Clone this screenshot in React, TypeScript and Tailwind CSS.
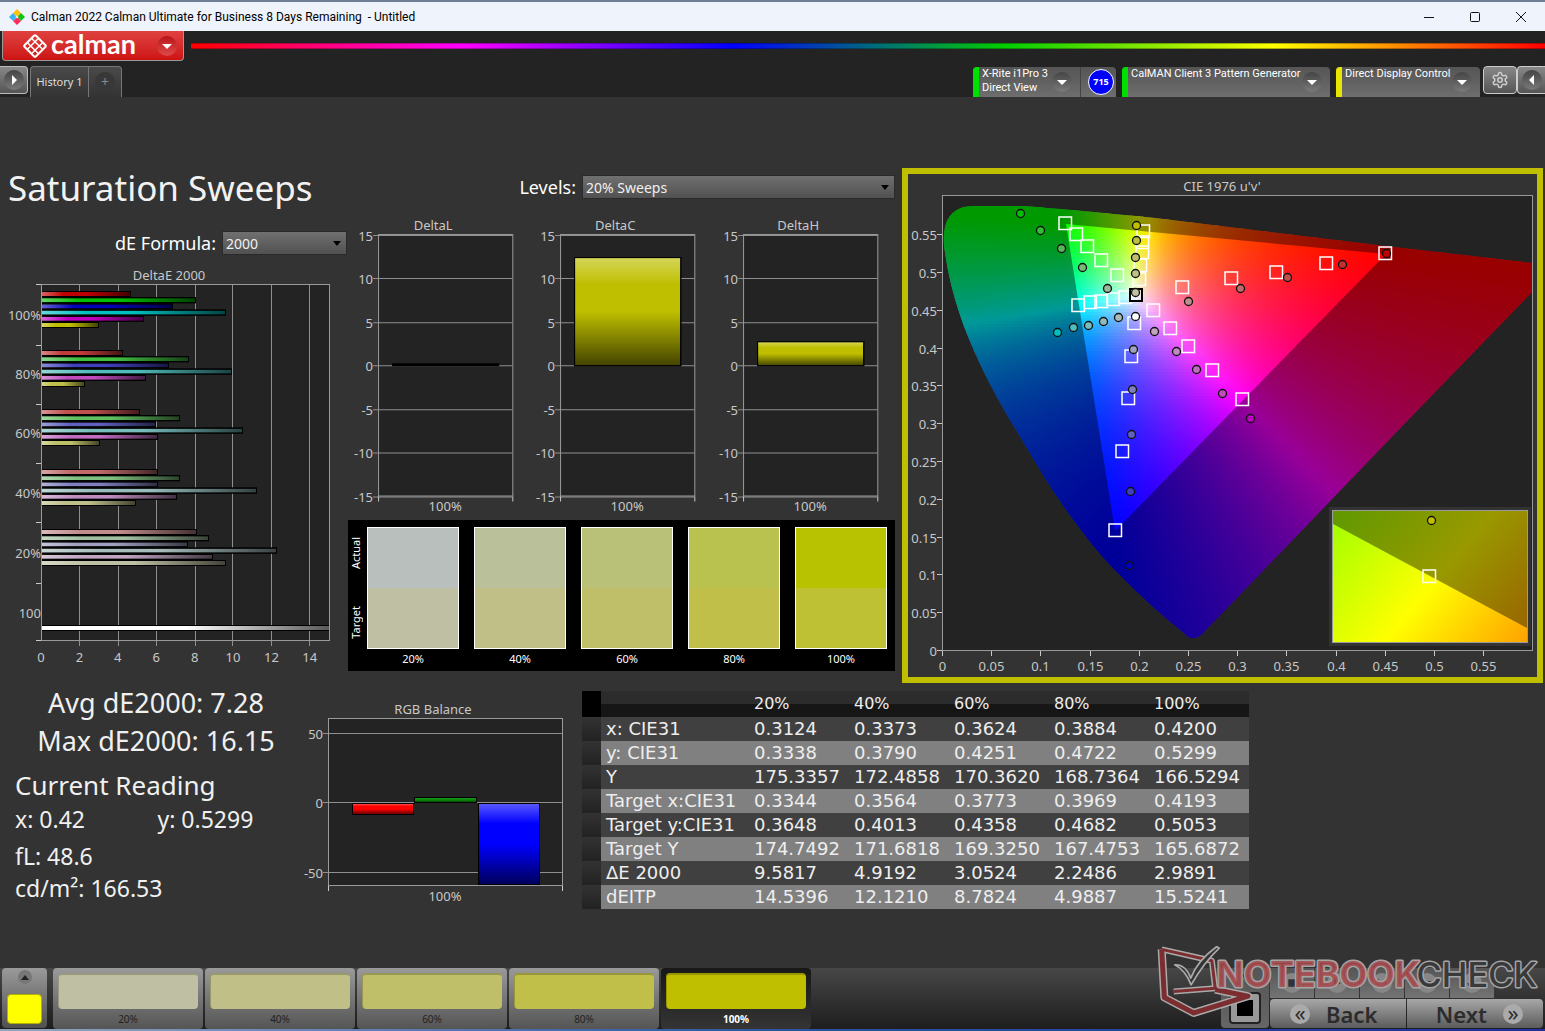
import React from "react";
import { LuSettings } from "react-icons/lu";

const LEVELS = ["20%", "40%", "60%", "80%", "100%"];

const ACTUAL = ["#b9bfbc", "#b9c09a", "#b9c077", "#b9c14f", "#b9c200"];
const TARGET = ["#bfbfa4", "#bfbf87", "#bfbf69", "#bfbf4a", "#bfc134"];
const TABS = ["#bfbfa4", "#bfbf87", "#bfbf69", "#bfbf4a", "#bfbf00"];

type BarGroup = { label: string; top: number; ends: number[]; colors: string[] };

const BAR_GROUPS: BarGroup[] = [
  {
    label: "100%",
    top: 294,
    ends: [130, 195, 172, 225, 143, 98],
    colors: ["#bf0000", "#00bf00", "#0000bf", "#00bfbf", "#bf00bf", "#bfbf00"],
  },
  {
    label: "80%",
    top: 353,
    ends: [122, 188, 168, 231, 145, 84],
    colors: ["#c03a3a", "#40bf40", "#4040bf", "#50bcbc", "#c04cc0", "#bfbf4a"],
  },
  {
    label: "60%",
    top: 412,
    ends: [139, 179, 155, 242, 157, 99],
    colors: ["#c05050", "#60bf60", "#6060c0", "#78bcbc", "#c06cc0", "#bfbf6a"],
  },
  {
    label: "40%",
    top: 472,
    ends: [157, 179, 157, 256, 176, 135],
    colors: ["#c06a6a", "#80c080", "#8080c0", "#98bcbc", "#c08cc0", "#bfbf8a"],
  },
  {
    label: "20%",
    top: 532,
    ends: [196, 208, 187, 276, 212, 225],
    colors: ["#c08c8c", "#a0c0a0", "#a0a0c0", "#a8bcbc", "#c0a4c0", "#bfbfa4"],
  },
];

const TABLE_ROWS: [string, string[]][] = [
  ["x: CIE31", ["0.3124", "0.3373", "0.3624", "0.3884", "0.4200"]],
  ["y: CIE31", ["0.3338", "0.3790", "0.4251", "0.4722", "0.5299"]],
  ["Y", ["175.3357", "172.4858", "170.3620", "168.7364", "166.5294"]],
  ["Target x:CIE31", ["0.3344", "0.3564", "0.3773", "0.3969", "0.4193"]],
  ["Target y:CIE31", ["0.3648", "0.4013", "0.4358", "0.4682", "0.5053"]],
  ["Target Y", ["174.7492", "171.6818", "169.3250", "167.4753", "165.6872"]],
  ["ΔE 2000", ["9.5817", "4.9192", "3.0524", "2.2486", "2.9891"]],
  ["dEITP", ["14.5396", "12.1210", "8.7824", "4.9887", "15.5241"]],
];

const TARGET_POINTS = [
  [1065, 223], [1076, 234], [1087, 246], [1101, 260], [1117, 275],
  [1143, 231], [1142, 242], [1142, 252], [1140, 265], [1139, 279],
  [1182, 287], [1231, 278], [1276, 272], [1326, 263], [1385, 253],
  [1153, 310], [1170, 328], [1188, 346], [1212, 370], [1242, 399],
  [1134, 323], [1131, 356], [1128, 398], [1122, 451], [1115, 530],
  [1125, 297], [1113, 299], [1101, 301], [1090, 302], [1078, 305],
];

const ACTUAL_POINTS: [number, number, string][] = [
  [1020, 213, "#00bf00"], [1040, 230, "#30bf30"], [1061, 248, "#58b858"],
  [1082, 267, "#78b878"], [1107, 288, "#98b898"],
  [1136, 225, "#bfbf00"], [1136, 240, "#bfbf40"], [1135, 257, "#bfbf69"],
  [1135, 273, "#bfbf87"], [1135, 292, "#bfbfa4"],
  [1386, 253, "#c00000"], [1342, 264, "#c03030"], [1287, 277, "#c05050"],
  [1240, 288, "#c06a6a"], [1188, 301, "#c08c8c"],
  [1057, 332, "#00bfbf"], [1073, 327, "#50bcbc"], [1088, 325, "#78bcbc"],
  [1103, 321, "#90bcbc"], [1118, 317, "#a8bcbc"],
  [1154, 331, "#c0a4c0"], [1176, 351, "#c08cc0"], [1196, 369, "#c06cc0"],
  [1222, 393, "#c04cc0"], [1250, 418, "#c000c0"],
  [1133, 349, "#a0a0c0"], [1132, 389, "#8080c0"], [1131, 434, "#6060c0"],
  [1130, 491, "#4040bf"], [1129, 565, "#0000bf"],
  [1135, 316, "#ffffff"],
];

// chart scale of the u'v' plane
const U0 = 942;
const V0 = 650;
const U_SCALE = 984;
const V_SCALE = 756;

const LOCUS =
  "M944 245 C943 228 946 206 974 206 L1023 206 Q1064 209 1155 218 L1270 232 L1385 246 L1533 263 V291 L1408 420 L1204 632 Q1193 644 1184 633 Q1150 606 1122 577 Q1100 556 1081 530 Q1058 500 1040 470 L1010 420 C980 368 952 312 944 245Z";
const GAMUT = "M1066 224 L1386 254 L1115 531Z";

const uvColor = (x: number, y: number) => {
  const u = (x - U0) / U_SCALE;
  const v = Math.max((V0 - y) / V_SCALE, 0.01);
  const X = (9 * u) / (4 * v);
  const Z = (12 - 3 * u - 20 * v) / (4 * v);
  const rgb = [
    3.2406 * X - 1.5372 - 0.4986 * Z,
    -0.9689 * X + 1.8758 + 0.0415 * Z,
    0.0557 * X - 0.204 + 1.057 * Z,
  ].map((c) => Math.max(c, 0));
  const max = Math.max(...rgb);
  return `rgb(${rgb.map((c) => Math.round((c / max) * 255)).join(",")})`;
};

const STRIP = 3;
const strips = Array.from({ length: 146 }, (_, i) => 204 + i * STRIP);
const stops = Array.from({ length: 41 }, (_, i) => i / 40);

const Shades = () => (
  <svg className="absolute h-0 w-0" aria-hidden="true">
    <defs>
      <linearGradient id="shade-x">
        <stop offset="0" stopColor="#fff" stopOpacity=".4" />
        <stop offset=".25" stopColor="#fff" stopOpacity="0" />
        <stop offset=".5" stopColor="#000" stopOpacity="0" />
        <stop offset="1" stopColor="#000" stopOpacity=".65" />
      </linearGradient>
      <linearGradient id="shade-y" x2="0" y2="1">
        <stop offset="0" stopColor="#fff" stopOpacity=".35" />
        <stop offset=".25" stopColor="#fff" stopOpacity="0" />
        <stop offset=".5" stopColor="#000" stopOpacity="0" />
        <stop offset="1" stopColor="#000" stopOpacity=".65" />
      </linearGradient>
    </defs>
  </svg>
);

type BarProps = {
  x: number;
  y: number;
  width: number;
  height: number;
  color: string;
  shade: string;
};
const Bar = ({ x, y, width, height, color, shade }: BarProps) => (
  <g stroke="#000">
    <rect x={x} y={y} width={width} height={height} fill={color} />
    <rect x={x} y={y} width={width} height={height} fill={`url(#${shade})`} />
  </g>
);

const DeltaEChart = () => (
  <svg viewBox="0 256 348 414" className="block h-auto w-full text-[13px]" fill="#c8c8c8">
    <text x="169" y="280" textAnchor="middle">DeltaE 2000</text>
    <rect x="41.5" y="284.5" width="288" height="356" fill="#232323" />
    <g stroke="#8f8f8f">
      {[79, 118, 156, 195, 232, 271, 309].map((x) => (
        <path key={x} d={`M${x + 0.5} 285V646`} />
      ))}
      {[284, 345, 404, 463, 522, 583, 640].map((y) => (
        <path key={y} d={`M36 ${y + 0.5}H41`} stroke="#c8c8c8" />
      ))}
    </g>
    {BAR_GROUPS.map((group) => (
      <g key={group.label}>
        {group.ends.map((end, i) => (
          <Bar
            key={i}
            x={41.5}
            y={group.top + i * 6.2 - 2.5}
            width={end - 41}
            height={5}
            color={group.colors[i]}
            shade="shade-x"
          />
        ))}
        <text x="41" y={group.top + 26} textAnchor="end">{group.label}</text>
      </g>
    ))}
    <Bar x={41.5} y={625.5} width={288} height={5} color="#ffffff" shade="shade-x" />
    <text x="41" y="618" textAnchor="end">100</text>
    <rect x="41.5" y="284.5" width="288" height="356" fill="none" stroke="#9a9a9a" />
    {[0, 2, 4, 6, 8, 10, 12, 14].map((n) => (
      <text key={n} x={41 + n * 19.2} y="662" textAnchor="middle">{n}</text>
    ))}
  </svg>
);

type DeltaProps = { title: string; top: number };
const DeltaChart = ({ title, top }: DeltaProps) => (
  <svg viewBox="0 216 182 303" className="block h-auto w-full text-[13px]" fill="#c8c8c8">
    <text x="85" y="230" textAnchor="middle">{title}</text>
    <rect x="30.5" y="234.5" width="134" height="261" fill="#232323" />
    {[15, 10, 5, 0, -5, -10, -15].map((n) => {
      const y = Math.round(365 - n * 8.7) + 0.5;
      return (
        <g key={n}>
          <path d={`M25 ${y}H164`} stroke="#8f8f8f" />
          <text x="25" y={y + 5} textAnchor="end">{n}</text>
        </g>
      );
    })}
    {top > 362 ? (
      <rect x="44" y="363" width="107" height="3" fill="#000" />
    ) : (
      <Bar x={44.5} y={top} width={106} height={365.5 - top} color="#bfbf00" shade="shade-y" />
    )}
    <rect x="30.5" y="234.5" width="134" height="261" fill="none" stroke="#9a9a9a" />
    <path d="M30.5 496V501M164.5 496V501" stroke="#c8c8c8" />
    <text x="97" y="510" textAnchor="middle">100%</text>
  </svg>
);

const RgbBalance = () => (
  <svg viewBox="300 691 282 217" className="block h-auto w-full text-[13px]" fill="#c8c8c8">
    <text x="433" y="714" textAnchor="middle">RGB Balance</text>
    <rect x="328.5" y="718.5" width="234" height="167" fill="#232323" />
    {[["50", 734], ["0", 803], ["-50", 873]].map(([label, y]) => (
      <g key={label}>
        <path d={`M323 ${Number(y) - 0.5}H562`} stroke="#8f8f8f" />
        <text x="323" y={Number(y) + 5} textAnchor="end">{label}</text>
      </g>
    ))}
    <Bar x={352.5} y={803.5} width={61} height={11} color="#ff0000" shade="shade-y" />
    <Bar x={414.5} y={797.5} width={62} height={5} color="#0a8a0a" shade="shade-y" />
    <Bar x={478.5} y={803.5} width={61} height={81} color="#0000ff" shade="shade-y" />
    <rect x="328.5" y="718.5" width="234" height="167" fill="none" stroke="#9a9a9a" />
    <path d="M328.5 886V891M562.5 886V891" stroke="#c8c8c8" />
    <text x="445" y="901" textAnchor="middle">100%</text>
  </svg>
);

const CieChart = () => (
  <svg viewBox="908 174 629 503" className="block h-auto w-full text-[13px]" fill="#c8c8c8">
    <defs>
      <clipPath id="locus">
        <path d={LOCUS} />
      </clipPath>
      {strips.map((y) => (
        <linearGradient key={y} id={`uv-${y}`}>
          {stops.map((s) => (
            <stop key={s} offset={s} stopColor={uvColor(943 + s * 590, y + STRIP / 2)} />
          ))}
        </linearGradient>
      ))}
      <linearGradient id="inset" gradientUnits="userSpaceOnUse" x1="1340" y1="505" x2="1520" y2="655">
        <stop offset="0" stopColor="#a0ff00" />
        <stop offset=".52" stopColor="#ffff00" />
        <stop offset="1" stopColor="#ffa000" />
      </linearGradient>
    </defs>
    <text x="1222" y="191" textAnchor="middle">CIE 1976 u'v'</text>
    <rect x="942.5" y="195.5" width="590" height="455" fill="#232323" />
    <g clipPath="url(#locus)">
      {strips.map((y) => (
        <rect key={y} x="943" y={y} width="590" height={STRIP + 0.5} fill={`url(#uv-${y})`} />
      ))}
    </g>
    <path d={LOCUS + GAMUT} fill="#000" fillOpacity=".4" fillRule="evenodd" />
    <rect x="942.5" y="195.5" width="590" height="455" fill="none" stroke="#9a9a9a" />

    <g fill="none" stroke="#fff" strokeWidth="1.5">
      {TARGET_POINTS.map(([x, y]) => (
        <rect key={`${x}-${y}`} x={x - 6} y={y - 6} width="12.5" height="12.5" />
      ))}
      <rect x="1130" y="289" width="12" height="12" stroke="#000" strokeWidth="2" />
    </g>
    {ACTUAL_POINTS.map(([x, y, color]) => (
      <circle key={`${x}-${y}`} cx={x + 0.5} cy={y + 0.5} r="4" fill={color} stroke="#111" strokeWidth="1.3" />
    ))}

    {Array.from({ length: 12 }, (_, i) => {
      const label = String(Number((i * 0.05).toFixed(2)));
      const x = Math.round(U0 + i * 0.05 * U_SCALE) + 0.5;
      const y = Math.round(V0 - i * 0.05 * V_SCALE) + 0.5;
      return (
        <g key={i}>
          <path d={`M${x} 651V656M937 ${y}H942`} stroke="#c8c8c8" />
          <text x={x} y="671" textAnchor="middle">{label}</text>
          <text x="937" y={y + 5} textAnchor="end">{label}</text>
        </g>
      );
    })}

    <rect x="1329" y="507" width="202" height="139" fill="#333" />
    <rect x="1332.5" y="510.5" width="195" height="132" fill="url(#inset)" />
    <path d="M1333 524V511H1527V628Z" fill="#000" fillOpacity=".4" />
    <rect x="1332.5" y="510.5" width="195" height="132" fill="none" stroke="#9a9a9a" />
    <rect x="1423" y="570" width="12.5" height="12.5" fill="none" stroke="#fff" strokeWidth="1.5" />
    <circle cx="1431.5" cy="520.5" r="4" fill="#bfbf00" stroke="#111" strokeWidth="1.3" />
  </svg>
);

type SelectProps = { id: string; label: string; value: string; className: string };
const SelectField = ({ id, label, value, className }: SelectProps) => (
  <div className="flex items-center justify-end gap-1.5 text-white">
    <label htmlFor={id} className="text-lg leading-6">{label}</label>
    <div className={`relative ${className}`}>
      <select
        id={id}
        defaultValue={value}
        className="block h-6 w-full appearance-none border border-[#2a2a2a] bg-linear-to-b from-[#707070] to-[#515151] pt-0.5 pl-[3px] text-sm leading-5 text-[#f0f0f0]"
      >
        <option>{value}</option>
      </select>
      <svg viewBox="0 0 8 5" className="pointer-events-none absolute top-2.5 right-1.5 h-[5px] w-2">
        <path d="M0 0H8L4 5Z" />
      </svg>
    </div>
  </div>
);

const Knob = ({ d }: { d: string }) => (
  <span className="flex h-5 w-5 shrink-0 items-center justify-center rounded-full bg-linear-to-b from-[#454545] to-[#7a7a7a]">
    <svg viewBox="0 0 10 10" className="h-2.5 w-2.5" fill="#fff">
      <path d={d} />
    </svg>
  </span>
);

const DOWN = "M0 3H10L5 8Z";

type DeviceProps = { lines: string[]; stripe: string; className: string };
const Device = ({ lines, stripe, className }: DeviceProps) => (
  <button
    className={`flex h-[30px] overflow-hidden rounded-t bg-linear-to-b from-[#555] to-[#6e6e6e] text-left font-[Roboto] text-[11px] leading-[14px] text-white ${className}`}
  >
    <span className={`mr-[3px] h-full w-1.5 shrink-0 ${stripe}`} />
    <span className="flex-1 whitespace-nowrap">
      {lines.map((line) => (
        <span key={line} className="block">{line}</span>
      ))}
    </span>
    <span className="mt-[5px] mr-2">
      <Knob d={DOWN} />
    </span>
  </button>
);

const TitleBar = () => (
  <div className="flex h-[31px] items-center border-t-2 border-[#6d7f95] bg-[#eff3fb] pr-px text-black">
    <svg viewBox="0 0 16 16" className="ml-[9px] h-4 w-4">
      <path d="M8 0L12 4L8 8L4 4Z" fill="#ffc20e" />
      <path d="M12 4L16 8L12 12L8 8Z" fill="#14c414" />
      <path d="M8 8L12 12L8 16L4 12Z" fill="#ff2a5f" />
      <path d="M4 4L8 8L4 12L0 8Z" fill="#3cb4f4" />
      <path d="M8 6.5L9.500 8L8 9.500L6.500 8Z" fill="#eff3fb" />
    </svg>
    <span className="ml-1.5 flex-1 font-[Roboto] text-xs whitespace-pre">
      Calman 2022 Calman Ultimate for Business 8 Days Remaining  - Untitled
    </span>
    {[
      ["Minimize", "M0 5.5H10"],
      ["Maximize", "M1.5 .5H8.500Q9.500 .5 9.500 1.500V8.500Q9.500 9.500 8.500 9.500H1.500Q.5 9.500 .5 8.500V1.500Q.5 .5 1.500 .5Z"],
      ["Close", "M0 0L10 10M10 0L0 10"],
    ].map(([name, d]) => (
      <button key={name} aria-label={name} className="flex h-full w-[46px] items-center justify-center">
        <svg viewBox="0 0 10 10" className="h-2.5 w-2.5" fill="none" stroke="#111">
          <path d={d} />
        </svg>
      </button>
    ))}
  </div>
);

const Header = () => (
  <header className="bg-[#232323]">
    <div className="flex h-[30px] items-center gap-[7px] pl-0.5">
      <button className="flex h-full w-[182px] items-center rounded-b border-x border-b border-[#999] bg-linear-to-b from-[#e04040] to-[#cc1111] pl-5">
        <svg viewBox="0 0 24 24" className="h-6 w-6" fill="none" stroke="#fff" strokeWidth="2">
          <g transform="rotate(45 12 12)">
            <path d="M4 9V5.500Q4 4 5.500 4H9M15 4H18.500Q20 4 20 5.500V9M20 15V18.500Q20 20 18.500 20H15M9 20H5.500Q4 20 4 18.500V15" />
            <path d="M9 4V20M15 4V20M4 9H20M4 15H20" strokeWidth="1.500" />
            <path d="M4 9V15M20 9V15M9 4H15M9 20H15" />
          </g>
        </svg>
        <span className="ml-1 flex-1 pb-1 text-left font-[Lato] text-[27px] leading-7 font-bold text-white">
          calman
        </span>
        <span className="mr-1.5 flex h-5 w-5 items-center justify-center rounded-full bg-linear-to-b from-[#b80f18] to-[#e04848]">
          <svg viewBox="0 0 10 10" className="h-2.5 w-2.5" fill="#fff">
            <path d={DOWN} />
          </svg>
        </span>
      </button>
      <div className="h-1.5 flex-1 border-y border-black/30 bg-[linear-gradient(to_right,#f00,#f0f_20%,#00f_40%,#0c0_60%,#ff0_80%,#f00)]" />
    </div>
    <div className="flex h-9 items-end">
      <button
        aria-label="Show panel"
        className="mr-0.5 mb-[3px] flex h-7 w-7 items-center justify-center rounded-r border border-l-0 border-[#bbb] bg-linear-to-b from-[#888] to-[#555]"
      >
        <Knob d="M3 0V10L8 5Z" />
      </button>
      <div className="flex h-[31px] rounded-t border border-b-0 border-[#777] bg-linear-to-b from-[#4a4a4a] to-[#333] text-[11px] text-[#ddd]">
        <button className="w-[58px] border-r border-[#777]">History 1</button>
        <button className="flex w-8 items-center justify-center">
          <span className="h-5 w-5 rounded-full bg-[#383838] text-sm leading-5 text-[#888]">+</span>
        </button>
      </div>
      <div className="flex-1" />
      <Device lines={["X-Rite i1Pro 3", "Direct View"]} stripe="bg-[#00e000]" className="w-[107px] rounded-r-none" />
      <div className="mr-1.5 flex h-[30px] w-9 items-center justify-end rounded-tr border-l border-[#444] bg-linear-to-b from-[#555] to-[#6e6e6e] pr-0.5">
        <span className="flex h-[26px] w-[26px] items-center justify-center rounded-full border border-white bg-[#0000ff] text-[9px] font-bold text-white">
          715
        </span>
      </div>
      <Device lines={["CalMAN Client 3 Pattern Generator"]} stripe="bg-[#00e000]" className="mr-1.5 w-52" />
      <Device lines={["Direct Display Control"]} stripe="bg-[#e6e600]" className="mr-[3px] w-36" />
      <button
        aria-label="Settings"
        className="mb-[3px] flex h-7 w-[34px] items-center justify-center rounded border border-[#ccc] bg-linear-to-b from-[#888] to-[#555]"
      >
        <LuSettings className="h-[18px] w-[18px] text-[#ccc]" />
      </button>
      <button
        aria-label="Collapse"
        className="mb-[3px] flex h-7 w-7 items-center justify-center rounded-l border border-r-0 border-[#ccc] bg-linear-to-b from-[#888] to-[#555]"
      >
        <Knob d="M7 0V10L2 5Z" />
      </button>
    </div>
  </header>
);

const SwatchStrip = () => (
  <div className="flex bg-black pt-[7px] pr-2 text-[11px] text-white">
    <div className="flex h-[122px] w-[19px] shrink-0 flex-col justify-between py-2.5">
      <span className="rotate-180 leading-4 [writing-mode:vertical-rl]">Actual</span>
      <span className="rotate-180 leading-4 [writing-mode:vertical-rl]">Target</span>
    </div>
    <div className="grid h-36 flex-1 grid-cols-5 gap-[15px]">
      {LEVELS.map((level, i) => (
        <div key={level}>
          <div className="flex h-[122px] flex-col border border-white">
            <div className="flex-1" style={{ background: ACTUAL[i] }} />
            <div className="flex-1" style={{ background: TARGET[i] }} />
          </div>
          <p className="text-center leading-5">{level}</p>
        </div>
      ))}
    </div>
  </div>
);

const Readings = () => (
  <div className="pt-px text-[23px] leading-8 text-[#f0f0f0]">
    <p className="pl-3 text-center text-[27px] leading-[38px]">Avg dE2000: 7.28</p>
    <p className="pl-3 text-center text-[27px] leading-[38px]">Max dE2000: 16.15</p>
    <div className="pl-[15px]">
      <h2 className="mt-1.5 text-[26px] leading-[38px]">Current Reading</h2>
      <div className="grid grid-cols-2">
        <p className="leading-[30px]">x: 0.42</p>
        <p className="leading-[30px]">y: 0.5299</p>
      </div>
      <p className="mt-1.5">fL: 48.6</p>
      <p>cd/m²: 166.53</p>
    </div>
  </div>
);

const DataTable = () => (
  <table className="w-full table-fixed text-left font-['DejaVu_Sans'] text-lg leading-6 text-[#eee]">
    <colgroup>
      <col className="w-[19px]" />
      <col className="w-[148px]" />
      <col span={5} />
    </colgroup>
    <thead>
      <tr className="h-[26px] bg-linear-to-b from-[#2c2c2c] from-50% to-[#161616] to-50% text-base">
        <td className="bg-black" />
        <td />
        {LEVELS.map((level) => (
          <th key={level} scope="col" className="p-0 pl-[5px] leading-5 font-normal">{level}</th>
        ))}
      </tr>
    </thead>
    <tbody>
      {TABLE_ROWS.map(([name, values]) => (
        <tr key={name} className="h-6 odd:bg-[#404040] even:bg-[#808080]">
          <td className="bg-linear-to-b from-[#333] to-[#222]" />
          <th scope="row" className="p-0 pl-[5px] font-normal whitespace-nowrap">{name}</th>
          {values.map((value) => (
            <td key={value} className="p-0 pl-[5px]">{value}</td>
          ))}
        </tr>
      ))}
    </tbody>
  </table>
);

const TOOL_ICONS = [
  ["Stop", "M3 3H13V13H3Z"],
  ["Play", "M4 2V14L13 8Z"],
  ["Read series", "M2 3H4V13H2ZM12 3H14V13H12ZM5 6H7V10H5ZM9 6H11V10H9Z"],
  ["Loop", "M5 5A3 3 0 1 0 5 11Q8 11 8 8Q8 5 11 5A3 3 0 1 1 11 11L10 9H12V7H10Q9 11 5 11L5 9H4V7H6Z"],
  ["Refresh", "M8 2A6 6 0 0 1 14 8H11A3 3 0 0 0 8 5ZM8 14A6 6 0 0 1 2 8H5A3 3 0 0 0 8 11Z"],
];

const Watermark = () => (
  <svg
    viewBox="50 30 1160 230"
    className="pointer-events-none absolute right-0 bottom-2 h-[77px] w-[388px]"
    fill="none"
    strokeLinejoin="round"
  >
    {[["#aaaaaa", 24], ["#7c2d30", 15]].map(([color, width]) => (
      <g key={color} stroke={String(color)} strokeWidth={width}>
        <path d="M64 46L214 80L224 162L100 172" strokeWidth={Number(width) - 6} />
        <path d="M224 166L322 186L160 236L72 190L64 46" />
      </g>
    ))}
    <path d="M103 92Q135 90 151 132Q170 80 228 38L236 42Q190 85 152 152Q135 108 103 92Z" fill="#333" stroke="#aaa" strokeWidth="5" />
    <g className="font-[Inter]" strokeWidth="9" paintOrder="stroke">
      <text x="228" y="158" fill="#a8484c" fillOpacity=".85" stroke="#a5a5a5" className="text-[107px] font-bold">NOTEBOOK</text>
      <text x="826" y="158" fill="#3a3a3a" stroke="#a5a5a5" className="text-[103px] font-medium">CHECK</text>
    </g>
  </svg>
);

const Footer = () => (
  <footer className="relative flex h-[61px] items-start bg-linear-to-b from-[#474747] to-[#1e1e1e] pr-0.5 pl-0.5">
    <button
      aria-label="Pattern window"
      className="mr-1.5 flex h-[60px] w-[45px] flex-col items-center justify-between rounded bg-linear-to-b from-[#9a9a9a] to-[#505050] pt-0.5 pb-1"
    >
      <span className="flex h-3.5 w-3.5 items-center justify-center rounded-full bg-[#777]">
        <svg viewBox="0 0 8 5" className="h-[5px] w-2" fill="#222">
          <path d="M4 0L8 5H0Z" />
        </svg>
      </span>
      <span className="h-[30px] w-[35px] rounded-sm border border-[#b0b000] bg-[#ffff00]" />
    </button>
    <div className="flex gap-0.5">
      {LEVELS.map((level, i) => (
        <button
          key={level}
          className={`flex h-[61px] w-[150px] flex-col rounded px-[5px] pt-[5px] text-[10px] ${
            i === 4
              ? "bg-linear-to-b from-[#181818] to-[#353535] font-bold text-white"
              : "bg-linear-to-b from-[#9a9a9a] to-[#555] text-[#222]"
          }`}
        >
          <span className="h-9 w-full shrink-0 rounded border-t-2 border-l border-black/20" style={{ background: TABS[i] }} />
          <span className="w-full text-center leading-5">{level}</span>
        </button>
      ))}
    </div>
    <div className="flex-1" />
    <button
      aria-label="Abort"
      className="mr-px flex h-[60px] w-12 flex-col items-center justify-between rounded bg-linear-to-b from-[#555] to-[#666] pt-1 pb-1"
    >
      <svg viewBox="0 0 8 5" className="h-[5px] w-2" fill="#222">
        <path d="M4 0L8 5H0Z" />
      </svg>
      <span className="flex h-8 w-8 items-center justify-center rounded border-2 border-[#222] bg-[#999]">
        <span className="h-4 w-4 bg-black" />
      </span>
    </button>
    <div className="w-[273px]">
      <div className="mb-px flex h-[30px] gap-px">
        {TOOL_ICONS.map(([name, d]) => (
          <button key={name} aria-label={name} className="flex h-full w-11 items-center justify-center bg-linear-to-b from-[#555] to-[#747474]">
            <span className="flex h-5 w-5 items-center justify-center rounded-full bg-[#868686]">
              <svg viewBox="0 0 16 16" className="h-3 w-3" fill="#333">
                <path d={d} />
              </svg>
            </span>
          </button>
        ))}
      </div>
      <div className="flex h-[29px] gap-px text-[22px] leading-7 font-semibold text-[#2c2c2c]">
        <button className="flex flex-1 items-center gap-4 rounded-l bg-linear-to-b from-[#a8a8a8] to-[#5c5c5c] pl-5">
          <span className="h-5 w-5 rounded-full bg-[#aaa] text-center leading-4 font-normal">«</span>
          Back
        </button>
        <button className="flex flex-1 items-center justify-end gap-4 rounded-r bg-linear-to-b from-[#a8a8a8] to-[#5c5c5c] pr-5">
          Next
          <span className="h-5 w-5 rounded-full bg-[#aaa] text-center leading-4 font-normal">»</span>
        </button>
      </div>
    </div>
    <Watermark />
  </footer>
);

const App = () => {
  return (
    <div className="flex min-h-screen w-full flex-col bg-[#333] font-['Noto_Sans',sans-serif]">
      <Shades />
      <TitleBar />
      <Header />
      <main className="flex-1 pt-[71px]">
        <section className="grid grid-cols-[348fr_553fr_644fr] items-start">
          <div>
            <h1 className="pl-2 text-[35px] leading-10 text-[#f2f2f2]">Saturation Sweeps</h1>
            <div className="mt-[23px] pr-px pb-px">
              <SelectField id="formula" label="dE Formula:" value="2000" className="w-[125px]" />
            </div>
            <DeltaEChart />
          </div>
          <div className="pt-[7px] pr-1.5">
            <SelectField id="levels" label="Levels:" value="20% Sweeps" className="w-[313px]" />
            <div className="mt-[17px] grid grid-cols-3">
              <DeltaChart title="DeltaL" top={363} />
              <DeltaChart title="DeltaC" top={257.5} />
              <DeltaChart title="DeltaH" top={341.5} />
            </div>
            <SwatchStrip />
          </div>
          <div className="mr-0.5 ml-px border-[6px] border-[#bfbf00]">
            <CieChart />
          </div>
        </section>
        <section className="grid grid-cols-[300fr_282fr_667fr_296fr] items-start">
          <Readings />
          <div className="pt-2">
            <RgbBalance />
          </div>
          <div className="pt-2">
            <DataTable />
          </div>
        </section>
      </main>
      <Footer />
      <div className="h-0.5 bg-linear-to-r from-[#8fa6c0] via-[#2a55a0] to-[#2030a0]" />
    </div>
  );
};

export default App;
